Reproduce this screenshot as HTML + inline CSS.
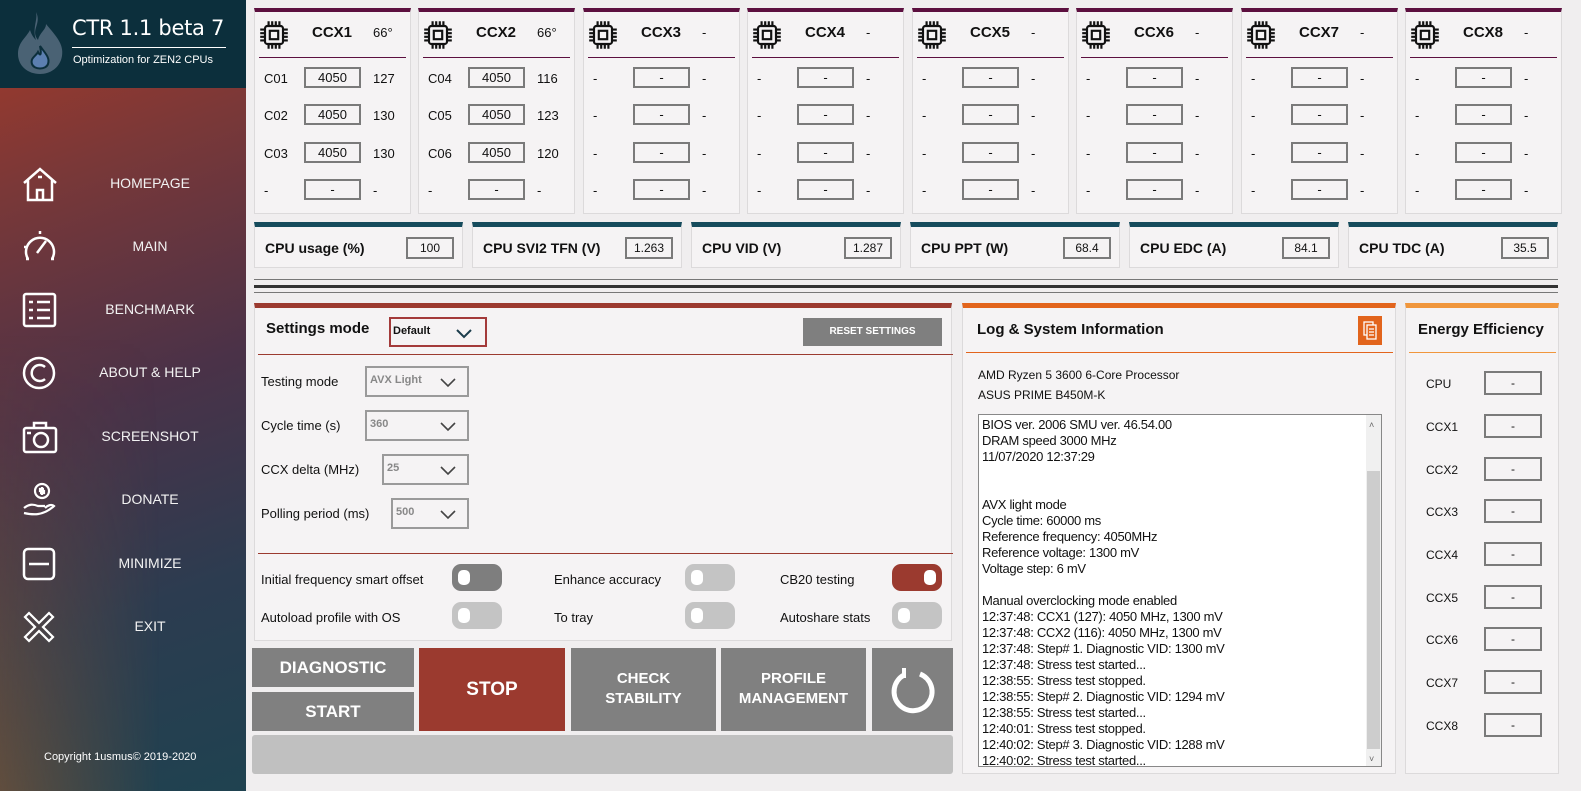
<!DOCTYPE html><html><head><meta charset="utf-8"><style>
*{box-sizing:border-box;margin:0;padding:0}
body{width:1581px;height:791px;overflow:hidden;background:#f0eeef;font-family:"Liberation Sans",sans-serif;font-size:13px;color:#111;position:relative}
.a{position:absolute}
#side{left:0;top:0;width:246px;height:791px;background:linear-gradient(160deg,#a63a28 0%,#7a3838 22%,#4a3248 50%,#2c3c50 75%,#1f4250 100%)}
#side:before{content:"";position:absolute;left:0;top:88px;width:246px;height:703px;background:linear-gradient(180deg,rgba(0,0,0,0) 35%,rgba(170,95,40,.45) 100%);-webkit-mask:linear-gradient(90deg,#000,transparent 65%);mask:linear-gradient(90deg,#000,transparent 65%)}
#hdr{left:0;top:0;width:246px;height:88px;background:#0c2f3c}
.nav{position:absolute;left:0;width:246px;height:40px;color:#f2f2f2;font-size:14px}
.nav span{position:absolute;left:150px;transform:translateX(-50%);top:12px;white-space:nowrap}
.nav svg{position:absolute;left:21px;top:3px}
.p{position:absolute;background:#f5f3f4;border:1px solid #dcdadb}
.ccx{top:8px;width:157px;height:206px;border-top:4px solid #5c0f3f}
.ccx .hd{position:absolute;left:4px;right:4px;top:45px;border-top:1px solid #5c0f3f}
.ccx .t{position:absolute;left:71px;top:12px;font-weight:bold;font-size:15px}
.ccx .tp{position:absolute;left:118px;top:13px;font-size:13px}
.r{position:absolute;left:0;width:157px;height:22px}
.r .l{position:absolute;left:9px;top:4px}
.r .b{position:absolute;left:49px;top:0;width:57px;height:21px;border:2px solid #7a7a7a;text-align:center;line-height:17px;background:#f5f3f4}
.r .v{position:absolute;left:118px;top:4px}
.st{top:222px;height:46px;border-top:5px solid #154b5c}
.st .l{position:absolute;left:10px;top:13px;font-weight:bold;font-size:14px}
.st .b{position:absolute;right:8px;top:10px;width:48px;height:22px;border:2px solid #7a7a7a;text-align:center;line-height:18px;font-size:12px}
.dd{position:absolute;height:31px;border:2px solid #9a9a9a;color:#888;font-size:11px;font-weight:bold;padding:6px 0 0 3px;background:#f5f3f4}
.dd svg{position:absolute;right:10px;top:9px}
.sl{position:absolute;left:6px;font-size:13px}
.tg{position:absolute;width:50px;height:27px;border-radius:9px;background:#c4c4c4}
.tg:after{content:"";position:absolute;left:6px;top:6px;width:12px;height:15px;border-radius:5px;background:#fff}
.tg.on:after{left:auto;right:6px}
.btn{position:absolute;background:#808080;color:#fff;font-weight:bold;text-align:center}
.log{font-size:13px;line-height:16px;letter-spacing:-.3px}
.ee{position:absolute;left:20px;font-size:12px}
.eb{position:absolute;left:78px;width:58px;height:24px;border:2px solid #7a7a7a;text-align:center;line-height:20px;font-size:12px}
</style></head><body>
<div id="side" class="a"></div>
<div id="hdr" class="a">
<svg class="a" style="left:16px;top:12px" width="48" height="62" viewBox="0 0 48 62"><path d="M20 0C26 12 14 18 22 28C24 20 30 18 30 12C40 24 48 32 46 44C44 56 34 62 24 62C12 62 2 54 2 42C2 30 10 26 14 18C16 24 18 26 20 28C16 16 22 8 20 0Z" fill="#4a6274"/><path d="M24 34C30 42 34 46 32 52C30 58 18 58 16 52C14 46 20 44 22 40C24 44 26 44 24 34Z" fill="#5c7fb0" stroke="#0c2f3c" stroke-width="2"/></svg>
<div class="a" style="left:72px;top:16px;color:#fff;font-size:21px;font-family:'DejaVu Sans','Liberation Sans',sans-serif;letter-spacing:-0.3px">CTR 1.1 beta 7</div>
<div class="a" style="left:72px;top:47px;width:154px;border-top:1px solid #fff"></div>
<div class="a" style="left:73px;top:54px;color:#fff;font-size:11px">Optimization for ZEN2 CPUs</div>
</div>
<div class="nav" style="top:163px"><svg width="38" height="36" viewBox="0 0 38 36" fill="none" stroke="#fff" stroke-width="2.5"><path d="M3 17L19 3L35 17M7 14V34H31V14M16 34V24H22V34M17 11H21"/></svg><span>HOMEPAGE</span></div>
<div class="nav" style="top:226px"><svg width="38" height="36" viewBox="0 0 38 36" fill="none" stroke="#fff" stroke-width="2.5"><path d="M7 30A14 14 0 1 1 31 30M6 18H3M19 5V2M16 24L25 12M5 30H8M30 30H33"/></svg><span>MAIN</span></div>
<div class="nav" style="top:289px"><svg width="38" height="36" viewBox="0 0 38 36" fill="none" stroke="#fff" stroke-width="2.5"><rect x="3" y="2" width="31" height="32" rx="2"/><path d="M8 10H12M16 10H29M8 18H12M16 18H29M8 26H12M16 26H29"/></svg><span>BENCHMARK</span></div>
<div class="nav" style="top:352px"><svg width="38" height="36" viewBox="0 0 38 36" fill="none" stroke="#fff" stroke-width="2.5"><circle cx="18" cy="18" r="15"/><path d="M24 12A8 8 0 1 0 24 24"/></svg><span>ABOUT &amp; HELP</span></div>
<div class="nav" style="top:416px"><svg width="38" height="36" viewBox="0 0 38 36" fill="none" stroke="#fff" stroke-width="2.5"><rect x="3" y="9" width="32" height="24" rx="2"/><path d="M13 9V4H25V9M6 14H10"/><circle cx="20" cy="21" r="7"/></svg><span>SCREENSHOT</span></div>
<div class="nav" style="top:479px"><svg width="38" height="36" viewBox="0 0 38 36" fill="none" stroke="#fff" stroke-width="2.2"><circle cx="21" cy="9" r="7"/><path d="M21 5V13M23 7H19V9H23V11H19M3 26C8 22 12 22 17 24H24M3 31C12 33 22 34 33 24C31 22 27 23 24 26"/></svg><span>DONATE</span></div>
<div class="nav" style="top:543px"><svg width="38" height="36" viewBox="0 0 38 36" fill="none" stroke="#fff" stroke-width="2.5"><rect x="3" y="3" width="30" height="30" rx="4"/><path d="M8 18H28"/></svg><span>MINIMIZE</span></div>
<div class="nav" style="top:606px"><svg width="38" height="36" viewBox="0 0 38 36" fill="none" stroke="#fff" stroke-width="2.2"><path d="M4 8L8 4L18 14L28 4L32 8L22 18L32 28L28 32L18 22L8 32L4 28L14 18Z"/></svg><span>EXIT</span></div>
<div class="a" style="left:44px;top:751px;color:#fff;font-size:11px">Copyright 1usmus© 2019-2020</div>

<svg width="0" height="0" style="position:absolute"><defs><g id="chip" fill="none" stroke="#111" stroke-width="1.8"><rect x="5" y="5" width="15" height="15" rx="2"/><rect x="9" y="9" width="7" height="7"/><path d="M8 1V5M11 1V5M14 1V5M17 1V5M8 20V24M11 20V24M14 20V24M17 20V24M1 8H5M1 11H5M1 14H5M1 17H5M20 8H24M20 11H24M20 14H24M20 17H24"/></g></defs></svg>

<div class="p ccx" style="left:254px"><svg class="a" style="left:4px;top:8px" width="30" height="30" viewBox="0 0 25 25"><use href="#chip"/></svg><div class="t" style="left:57px">CCX1</div><div class="tp">66°</div><div class="hd"></div>
<div class="r" style="top:55px"><span class="l">C01</span><span class="b">4050</span><span class="v">127</span></div>
<div class="r" style="top:92px"><span class="l">C02</span><span class="b">4050</span><span class="v">130</span></div>
<div class="r" style="top:130px"><span class="l">C03</span><span class="b">4050</span><span class="v">130</span></div>
<div class="r" style="top:167px"><span class="l">-</span><span class="b">-</span><span class="v">-</span></div></div>
<div class="p ccx" style="left:418px"><svg class="a" style="left:4px;top:8px" width="30" height="30" viewBox="0 0 25 25"><use href="#chip"/></svg><div class="t" style="left:57px">CCX2</div><div class="tp">66°</div><div class="hd"></div>
<div class="r" style="top:55px"><span class="l">C04</span><span class="b">4050</span><span class="v">116</span></div>
<div class="r" style="top:92px"><span class="l">C05</span><span class="b">4050</span><span class="v">123</span></div>
<div class="r" style="top:130px"><span class="l">C06</span><span class="b">4050</span><span class="v">120</span></div>
<div class="r" style="top:167px"><span class="l">-</span><span class="b">-</span><span class="v">-</span></div></div>
<div class="p ccx" style="left:583px"><svg class="a" style="left:4px;top:8px" width="30" height="30" viewBox="0 0 25 25"><use href="#chip"/></svg><div class="t" style="left:57px">CCX3</div><div class="tp">-</div><div class="hd"></div>
<div class="r" style="top:55px"><span class="l">-</span><span class="b">-</span><span class="v">-</span></div><div class="r" style="top:92px"><span class="l">-</span><span class="b">-</span><span class="v">-</span></div><div class="r" style="top:130px"><span class="l">-</span><span class="b">-</span><span class="v">-</span></div><div class="r" style="top:167px"><span class="l">-</span><span class="b">-</span><span class="v">-</span></div></div>
<div class="p ccx" style="left:747px"><svg class="a" style="left:4px;top:8px" width="30" height="30" viewBox="0 0 25 25"><use href="#chip"/></svg><div class="t" style="left:57px">CCX4</div><div class="tp">-</div><div class="hd"></div>
<div class="r" style="top:55px"><span class="l">-</span><span class="b">-</span><span class="v">-</span></div><div class="r" style="top:92px"><span class="l">-</span><span class="b">-</span><span class="v">-</span></div><div class="r" style="top:130px"><span class="l">-</span><span class="b">-</span><span class="v">-</span></div><div class="r" style="top:167px"><span class="l">-</span><span class="b">-</span><span class="v">-</span></div></div>
<div class="p ccx" style="left:912px"><svg class="a" style="left:4px;top:8px" width="30" height="30" viewBox="0 0 25 25"><use href="#chip"/></svg><div class="t" style="left:57px">CCX5</div><div class="tp">-</div><div class="hd"></div>
<div class="r" style="top:55px"><span class="l">-</span><span class="b">-</span><span class="v">-</span></div><div class="r" style="top:92px"><span class="l">-</span><span class="b">-</span><span class="v">-</span></div><div class="r" style="top:130px"><span class="l">-</span><span class="b">-</span><span class="v">-</span></div><div class="r" style="top:167px"><span class="l">-</span><span class="b">-</span><span class="v">-</span></div></div>
<div class="p ccx" style="left:1076px"><svg class="a" style="left:4px;top:8px" width="30" height="30" viewBox="0 0 25 25"><use href="#chip"/></svg><div class="t" style="left:57px">CCX6</div><div class="tp">-</div><div class="hd"></div>
<div class="r" style="top:55px"><span class="l">-</span><span class="b">-</span><span class="v">-</span></div><div class="r" style="top:92px"><span class="l">-</span><span class="b">-</span><span class="v">-</span></div><div class="r" style="top:130px"><span class="l">-</span><span class="b">-</span><span class="v">-</span></div><div class="r" style="top:167px"><span class="l">-</span><span class="b">-</span><span class="v">-</span></div></div>
<div class="p ccx" style="left:1241px"><svg class="a" style="left:4px;top:8px" width="30" height="30" viewBox="0 0 25 25"><use href="#chip"/></svg><div class="t" style="left:57px">CCX7</div><div class="tp">-</div><div class="hd"></div>
<div class="r" style="top:55px"><span class="l">-</span><span class="b">-</span><span class="v">-</span></div><div class="r" style="top:92px"><span class="l">-</span><span class="b">-</span><span class="v">-</span></div><div class="r" style="top:130px"><span class="l">-</span><span class="b">-</span><span class="v">-</span></div><div class="r" style="top:167px"><span class="l">-</span><span class="b">-</span><span class="v">-</span></div></div>
<div class="p ccx" style="left:1405px"><svg class="a" style="left:4px;top:8px" width="30" height="30" viewBox="0 0 25 25"><use href="#chip"/></svg><div class="t" style="left:57px">CCX8</div><div class="tp">-</div><div class="hd"></div>
<div class="r" style="top:55px"><span class="l">-</span><span class="b">-</span><span class="v">-</span></div><div class="r" style="top:92px"><span class="l">-</span><span class="b">-</span><span class="v">-</span></div><div class="r" style="top:130px"><span class="l">-</span><span class="b">-</span><span class="v">-</span></div><div class="r" style="top:167px"><span class="l">-</span><span class="b">-</span><span class="v">-</span></div></div>

<div class="p st" style="left:254px;width:209px"><span class="l">CPU usage (%)</span><span class="b">100</span></div>
<div class="p st" style="left:472px;width:210px"><span class="l">CPU SVI2 TFN (V)</span><span class="b">1.263</span></div>
<div class="p st" style="left:691px;width:210px"><span class="l">CPU VID (V)</span><span class="b">1.287</span></div>
<div class="p st" style="left:910px;width:210px"><span class="l">CPU PPT (W)</span><span class="b">68.4</span></div>
<div class="p st" style="left:1129px;width:210px"><span class="l">CPU EDC (A)</span><span class="b">84.1</span></div>
<div class="p st" style="left:1348px;width:210px"><span class="l">CPU TDC (A)</span><span class="b">35.5</span></div>

<div class="a" style="left:254px;top:279px;width:1304px;height:1px;background:#777"></div>
<div class="a" style="left:254px;top:285px;width:1304px;height:3px;background:#333"></div>
<div class="a" style="left:254px;top:292px;width:1304px;height:1px;background:#777"></div>

<div class="p" style="left:254px;top:303px;width:698px;height:338px;border-top:5px solid #9b3a2f">
<div class="a" style="left:11px;top:12px;font-weight:bold;font-size:15px">Settings mode</div>
<div class="a" style="left:134px;top:9px;width:98px;height:30px;border:2px solid #a33a3a;font-size:11px;font-weight:bold;padding:6px 0 0 2px;background:#f5f3f4">Default<svg class="a" style="right:12px;top:9px" width="18" height="12"><path d="M2 2L9 9L16 2" fill="none" stroke="#1c3d4c" stroke-width="2"/></svg></div>
<div class="a" style="left:548px;top:10px;width:139px;height:28px;background:#7f7f7f;color:#fff;font-size:10px;font-weight:bold;text-align:center;line-height:28px">RESET SETTINGS</div>
<div class="a" style="left:3px;top:46px;width:695px;border-top:1px solid #9b3a2f"></div>
<div class="sl" style="top:66px">Testing mode</div><div class="dd" style="left:110px;top:58px;width:104px">AVX Light<svg width="18" height="12"><path d="M2 2L9 9L16 2" fill="none" stroke="#444" stroke-width="1.6"/></svg></div>
<div class="sl" style="top:110px">Cycle time (s)</div><div class="dd" style="left:110px;top:102px;width:104px">360<svg width="18" height="12"><path d="M2 2L9 9L16 2" fill="none" stroke="#444" stroke-width="1.6"/></svg></div>
<div class="sl" style="top:154px">CCX delta (MHz)</div><div class="dd" style="left:127px;top:146px;width:87px">25<svg width="18" height="12"><path d="M2 2L9 9L16 2" fill="none" stroke="#444" stroke-width="1.6"/></svg></div>
<div class="sl" style="top:198px">Polling period (ms)</div><div class="dd" style="left:136px;top:190px;width:78px">500<svg width="18" height="12"><path d="M2 2L9 9L16 2" fill="none" stroke="#444" stroke-width="1.6"/></svg></div>
<div class="a" style="left:3px;top:245px;width:695px;border-top:1px solid #9b3a2f"></div>
<div class="sl" style="top:264px">Initial frequency smart offset</div><div class="tg" style="left:197px;top:256px;background:#7e7e7e"></div>
<div class="sl" style="left:299px;top:264px">Enhance accuracy</div><div class="tg" style="left:430px;top:256px"></div>
<div class="sl" style="left:525px;top:264px">CB20 testing</div><div class="tg on" style="left:637px;top:256px;background:#9b3a2f"></div>
<div class="sl" style="top:302px">Autoload profile with OS</div><div class="tg" style="left:197px;top:294px"></div>
<div class="sl" style="left:299px;top:302px">To tray</div><div class="tg" style="left:430px;top:294px"></div>
<div class="sl" style="left:525px;top:302px">Autoshare stats</div><div class="tg" style="left:637px;top:294px"></div>
</div>

<div class="btn" style="left:252px;top:648px;width:162px;height:39px;font-size:17px;line-height:39px">DIAGNOSTIC</div>
<div class="btn" style="left:252px;top:692px;width:162px;height:39px;font-size:17px;line-height:39px">START</div>
<div class="btn" style="left:419px;top:648px;width:146px;height:83px;background:#9b3a2f;font-size:19px;line-height:83px">STOP</div>
<div class="btn" style="left:571px;top:648px;width:145px;height:83px;font-size:15px;line-height:20px;padding-top:21px">CHECK<br>STABILITY</div>
<div class="btn" style="left:721px;top:648px;width:145px;height:83px;font-size:15px;line-height:20px;padding-top:21px">PROFILE<br>MANAGEMENT</div>
<div class="btn" style="left:872px;top:648px;width:81px;height:83px"><svg class="a" style="left:18px;top:18px" width="46" height="48" viewBox="0 0 46 48" fill="none" stroke="#fff" stroke-width="5"><path d="M14 9A19 19 0 1 0 30 8"/><path d="M14 2V12" stroke-width="4"/></svg></div>
<div class="a" style="left:252px;top:735px;width:701px;height:39px;background:#c0c0c0;border-radius:3px"></div>

<div class="p" style="left:962px;top:303px;width:434px;height:471px;border-top:5px solid #e2641c">
<div class="a" style="left:14px;top:13px;font-weight:bold;font-size:15px">Log &amp; System Information</div>
<div class="a" style="left:395px;top:8px;width:24px;height:29px;background:#e2641c"><svg class="a" style="left:5px;top:5px" width="14" height="19" fill="none" stroke="#fff" stroke-width="1.3"><rect x="1" y="1" width="9" height="13"/><rect x="4" y="4" width="9" height="14" fill="#e2641c"/><path d="M6 8H11M6 11H11M6 14H11"/></svg></div>
<div class="a" style="left:3px;top:44px;width:427px;border-top:1px solid #e2641c"></div>
<div class="a" style="left:15px;top:57px;font-size:12px;line-height:20px">AMD Ryzen 5 3600 6-Core Processor<br>ASUS PRIME B450M-K</div>
<div class="a log" style="left:15px;top:106px;width:404px;height:353px;background:#fff;border:1px solid #888;padding:2px 0 0 3px;overflow:hidden">BIOS ver. 2006 SMU ver. 46.54.00<br>DRAM speed 3000 MHz<br>11/07/2020 12:37:29<br><br><br>AVX light mode<br>Cycle time: 60000 ms<br>Reference frequency: 4050MHz<br>Reference voltage: 1300 mV<br>Voltage step: 6 mV<br><br>Manual overclocking mode enabled<br>12:37:48: CCX1 (127): 4050 MHz, 1300 mV<br>12:37:48: CCX2 (116): 4050 MHz, 1300 mV<br>12:37:48: Step# 1. Diagnostic VID: 1300 mV<br>12:37:48: Stress test started...<br>12:38:55: Stress test stopped.<br>12:38:55: Step# 2. Diagnostic VID: 1294 mV<br>12:38:55: Stress test started...<br>12:40:01: Stress test stopped.<br>12:40:02: Step# 3. Diagnostic VID: 1288 mV<br>12:40:02: Stress test started...
<div class="a" style="right:0;top:0;width:15px;height:351px;background:#f0f0f0"><div class="a" style="left:1px;top:56px;width:13px;height:278px;background:#cdcdcd"></div><div class="a" style="left:3px;top:2px;font-size:9px;color:#666">˄</div><div class="a" style="left:3px;top:336px;font-size:9px;color:#666">˅</div></div></div>
</div>

<div class="p" style="left:1405px;top:303px;width:154px;height:471px;border-top:5px solid #f0963c">
<div class="a" style="left:12px;top:13px;font-weight:bold;font-size:15px">Energy Efficiency</div>
<div class="a" style="left:3px;top:44px;width:147px;border-top:1px solid #f0963c"></div>
<div class="ee" style="top:69px">CPU</div><div class="eb" style="top:63px">-</div>
<div class="ee" style="top:112px">CCX1</div><div class="eb" style="top:106px">-</div>
<div class="ee" style="top:155px">CCX2</div><div class="eb" style="top:149px">-</div>
<div class="ee" style="top:197px">CCX3</div><div class="eb" style="top:191px">-</div>
<div class="ee" style="top:240px">CCX4</div><div class="eb" style="top:234px">-</div>
<div class="ee" style="top:283px">CCX5</div><div class="eb" style="top:277px">-</div>
<div class="ee" style="top:325px">CCX6</div><div class="eb" style="top:319px">-</div>
<div class="ee" style="top:368px">CCX7</div><div class="eb" style="top:362px">-</div>
<div class="ee" style="top:411px">CCX8</div><div class="eb" style="top:405px">-</div>
</div>
</body></html>
